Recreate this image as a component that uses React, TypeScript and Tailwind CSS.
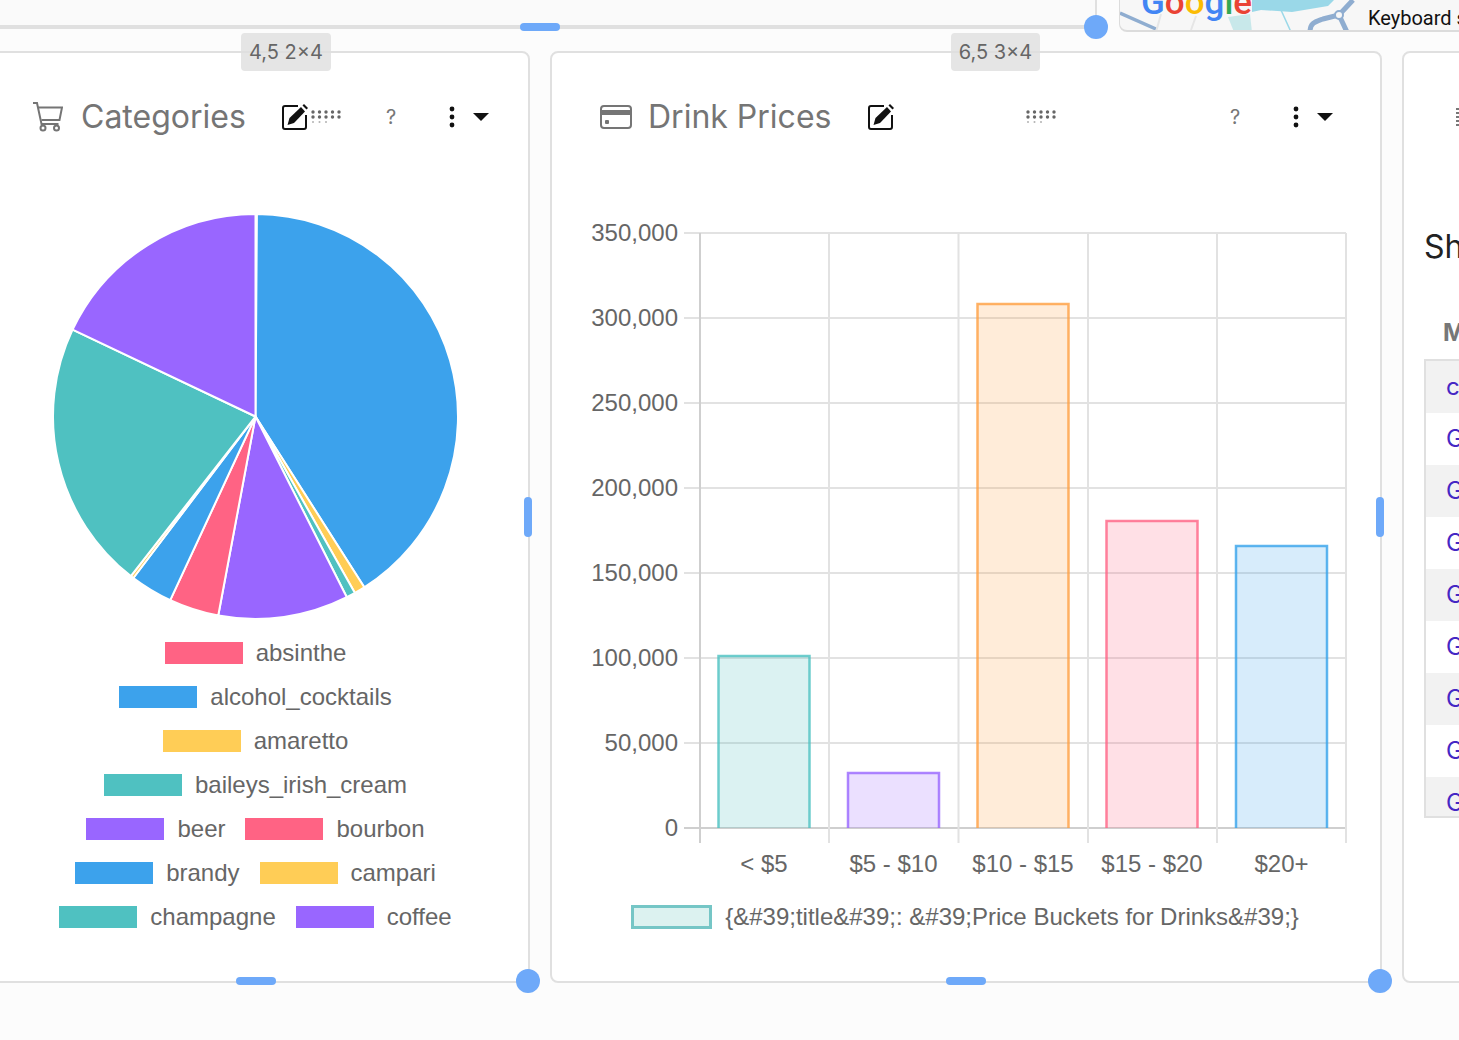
const handle = "absolute bg-[#6ea9f9]";

const polar = (angle: number, r = 202.5) => {
  const a = ((angle - 90) * Math.PI) / 180;
  return `${255.5 + r * Math.cos(a)} ${416.5 + r * Math.sin(a)}`;
};

const slices = [
  { from: 0, to: 0.4, color: "#ff6384" },
  { from: 0.4, to: 147.5, color: "#3ca2ec" },
  { from: 147.5, to: 150.6, color: "#ffcd56" },
  { from: 150.6, to: 153.2, color: "#4fc1c1" },
  { from: 153.2, to: 190.6, color: "#9966ff" },
  { from: 190.6, to: 204.9, color: "#ff6384" },
  { from: 204.9, to: 217.1, color: "#3ca2ec" },
  { from: 217.1, to: 218, color: "#ffcd56" },
  { from: 218, to: 295.4, color: "#4fc1c1" },
  { from: 295.4, to: 360, color: "#9966ff" },
];

const legend = [
  { name: "absinthe", color: "bg-[#ff6384]" },
  { name: "alcohol_cocktails", color: "bg-[#3ca2ec]" },
  { name: "amaretto", color: "bg-[#ffcd56]" },
  { name: "baileys_irish_cream", color: "bg-[#4fc1c1]" },
  { name: "beer", color: "bg-[#9966ff]" },
  { name: "bourbon", color: "bg-[#ff6384]" },
  { name: "brandy", color: "bg-[#3ca2ec]" },
  { name: "campari", color: "bg-[#ffcd56]" },
  { name: "champagne", color: "bg-[#4fc1c1]" },
  { name: "coffee", color: "bg-[#9966ff]" },
];

const yTicks = [
  { label: "350,000", y: 233 },
  { label: "300,000", y: 318 },
  { label: "250,000", y: 403 },
  { label: "200,000", y: 488 },
  { label: "150,000", y: 573 },
  { label: "100,000", y: 658 },
  { label: "50,000", y: 743 },
  { label: "0", y: 828 },
];

const xLines = [700, 829, 958.5, 1088, 1217, 1346];

const bars = [
  { label: "< $5", x: 718.5, w: 91, top: 656, fill: "#4bc0c0" },
  { label: "$5 - $10", x: 848, w: 91, top: 773, fill: "#9966ff" },
  { label: "$10 - $15", x: 977.5, w: 91, top: 304, fill: "#ff9f40" },
  { label: "$15 - $20", x: 1106.5, w: 91, top: 521, fill: "#ff6384" },
  { label: "$20+", x: 1236, w: 91, top: 546, fill: "#36a2eb" },
];

const CartIcon = () => (
  <svg width="30" height="30" viewBox="0 0 30 30" fill="none" stroke="#757575" strokeWidth="2" className="shrink-0">
    <path d="M0 1h4l4.500 21h17" />
    <path d="M5 5.500h24l-2.500 12.500h-18" />
    <circle cx="10" cy="26" r="2.500" />
    <circle cx="23.500" cy="26" r="2.500" />
  </svg>
);

const PriceIcon = () => (
  <svg width="32" height="24" viewBox="0 0 32 24" fill="none" className="shrink-0">
    <rect x="1" y="1" width="30" height="22" rx="3" stroke="#757575" strokeWidth="2" />
    <rect x="1" y="5" width="30" height="5" fill="#757575" />
    <rect x="5" y="15" width="4" height="4" rx="1" fill="#757575" />
  </svg>
);

const EditIcon = () => (
  <svg width="26" height="26" viewBox="0 0 26 26" fill="none" className="shrink-0">
    <path d="M16 2H3a2 2 0 0 0-2 2v19a2 2 0 0 0 2 2h19a2 2 0 0 0 2-2V11" stroke="#111" strokeWidth="2" />
    <path d="M5.500 21l2-7L19 3l4 4.500L12 19z" fill="#111" />
    <path d="M20.500 1.500L22 0l4 4-1.500 1.500z" fill="#111" />
  </svg>
);

const DragDots = () => (
  <svg width="30" height="14" viewBox="0 0 30 14" fill="#666" className="shrink-0">
    {[2, 8.500, 15, 21.500, 28].map((x) => (
      <g key={x}>
        <circle cx={x} cy="2" r="1.700" />
        <circle cx={x} cy="7" r="1.700" />
      </g>
    ))}
    <circle cx="2" cy="12" r="1" opacity="0.5" />
    <circle cx="8.500" cy="12" r="1" opacity="0.5" />
    <circle cx="15" cy="12" r="1" opacity="0.5" />
  </svg>
);

const CardActions = () => (
  <div className="ml-auto flex items-center">
    <span className="w-[20px] text-center text-[20px] text-[#777]">?</span>
    <svg width="6" height="22" viewBox="0 0 6 22" fill="#111" className="ml-[48px]">
      <circle cx="3" cy="3" r="2.400" />
      <circle cx="3" cy="11" r="2.400" />
      <circle cx="3" cy="19" r="2.400" />
    </svg>
    <svg width="16" height="8" viewBox="0 0 16 8" fill="#111" className="ml-[18px]">
      <path d="M0 0h16l-8 8z" />
    </svg>
  </div>
);

const Badge = ({ text, className }: { text: string; className: string }) => (
  <div className={`absolute top-[-20px] flex h-[38px] items-center justify-center rounded-[4px] bg-[#dedede]/80 text-[20px] text-[#666] ${className}`}>
    {text}
  </div>
);

const CategoriesCard = () => (
  <div className="relative h-[932px] w-[561px] shrink-0 rounded-lg border-2 border-[#e0e0e0] bg-white">
    <Badge text="4,5 2×4" className="left-[270px] w-[90px]" />
    <div className="mt-[42px] flex h-[44px] items-center pl-[62px] pr-[39px]">
      <CartIcon />
      <h2 className="ml-[18px] text-[32px] font-[425] text-[#757575]">Categories</h2>
      <div className="ml-[36px]">
        <EditIcon />
      </div>
      <div className="ml-[3px]">
        <DragDots />
      </div>
      <CardActions />
    </div>
    <div className="pl-[62px] pr-[50px]">
      <svg viewBox="33 210 445 421" className="mt-[71px] block h-[421px] w-[445px]">
        {slices.map((s) => (
          <path
            key={s.from}
            d={`M255.500 416.500L${polar(s.from)}A202.500 202.500 0 ${s.to - s.from > 180 ? 1 : 0} 1 ${polar(s.to)}Z`}
            fill={s.color}
            stroke="#fff"
            strokeWidth="2"
            strokeLinejoin="round"
          />
        ))}
      </svg>
      <div className="flex flex-wrap justify-center gap-x-5 font-['Liberation_Sans',sans-serif] text-[24px] text-[#666]">
        {legend.map((l) => (
          <div key={l.name} className="flex h-[44px] items-center gap-[13px]">
            <span className={`h-[22px] w-[78px] ${l.color}`} />
            {l.name}
          </div>
        ))}
      </div>
    </div>
    <div className={`${handle} right-[-4px] top-[444px] h-[40px] w-[8px] rounded`} />
    <div className={`${handle} bottom-[-4px] left-[265px] h-[8px] w-[40px] rounded`} />
    <div className={`${handle} bottom-[-12px] right-[-12px] size-[24px] rounded-full`} />
  </div>
);

const PricesCard = () => (
  <div className="relative h-[932px] w-[832px] shrink-0 rounded-lg border-2 border-[#e0e0e0] bg-white">
    <Badge text="6,5 3×4" className="left-[399px] w-[89px]" />
    <div className="mt-[42px] flex h-[44px] items-center pl-[48px] pr-[47px]">
      <PriceIcon />
      <h2 className="ml-[16px] text-[32px] font-[425] text-[#757575]">Drink Prices</h2>
      <div className="ml-[37px]">
        <EditIcon />
      </div>
      <div className="ml-[132px]">
        <DragDots />
      </div>
      <CardActions />
    </div>
    <svg viewBox="553 210 827 680" className="ml-[1px] mt-[71px] block h-[680px] w-[827px] font-['Liberation_Sans',sans-serif]">
      {yTicks.map((t) => (
        <g key={t.label}>
          <line x1="684" x2="1346" y1={t.y} y2={t.y} stroke={t.y === 828 ? "#cfcfcf" : "#e2e2e2"} strokeWidth="2" />
          <text x="678" y={t.y + 8} textAnchor="end" fontSize="24" fill="#666">
            {t.label}
          </text>
        </g>
      ))}
      {xLines.map((x, i) => (
        <line key={x} x1={x} x2={x} y1="233" y2="843" stroke={i === 0 ? "#cfcfcf" : "#e2e2e2"} strokeWidth="2" />
      ))}
      {bars.map((b) => (
        <g key={b.label}>
          <path
            d={`M${b.x} 828V${b.top}H${b.x + b.w}V828`}
            fill={b.fill}
            fillOpacity="0.2"
            stroke={b.fill}
            strokeOpacity="0.8"
            strokeWidth="2.500"
          />
          <text x={b.x + b.w / 2} y="872" textAnchor="middle" fontSize="24" fill="#666">
            {b.label}
          </text>
        </g>
      ))}
    </svg>
    <div className="mt-[15px] flex items-center justify-center gap-[13px] pr-[2px] font-['Liberation_Sans',sans-serif] text-[24px] leading-[24px] text-[#666]">
      <span className="h-[24px] w-[81px] shrink-0 border-[3px] border-[#75c6c6] bg-[#dcf2f0]" />
      {"{&#39;title&#39;: &#39;Price Buckets for Drinks&#39;}"}
    </div>
    <div className={`${handle} right-[-4px] top-[444px] h-[40px] w-[8px] rounded`} />
    <div className={`${handle} bottom-[-4px] left-[394px] h-[8px] w-[40px] rounded`} />
    <div className={`${handle} bottom-[-12px] right-[-12px] size-[24px] rounded-full`} />
  </div>
);

const rows = ["c", "G", "G", "G", "G", "G", "G", "G", "G"];

const ShotsCard = () => (
  <div className="relative h-[932px] w-[831px] shrink-0 rounded-lg border-2 border-[#e0e0e0] bg-white">
    <div className="mt-[42px] flex h-[44px] items-center pl-[52px]">
      <svg width="3" height="20" viewBox="0 0 3 20" fill="#777">
        {[1, 5, 9, 13, 17].map((y) => (
          <rect key={y} y={y} width="3" height="2" />
        ))}
      </svg>
    </div>
    <h3 className="ml-[20px] mt-[84px] h-[48px] text-[32px] leading-[48px] text-[#222]">Sh</h3>
    <div className="ml-[39px] mt-[47px] h-[30px] text-[24px] font-bold leading-[30px] text-[#777]">M</div>
    <div className="ml-[20px] mt-[11px] border-2 border-r-0 border-[#e0e0e0] text-[24px] leading-[52px] text-[#4527c4]">
      {rows.map((r, i) => (
        <div
          key={i}
          className={`overflow-hidden pl-5 ${i % 2 === 0 ? "bg-[#f2f2f2]" : "bg-white"} ${i === 8 ? "h-[39px]" : "h-[52px]"}`}
        >
          {r}
        </div>
      ))}
    </div>
  </div>
);

const MapStrip = () => (
  <div className="h-[32px] flex-1 overflow-hidden rounded-bl-lg border-b-2 border-l border-[#dcdcdc] bg-[#f7f7f7]">
    <svg viewBox="1119 0 340 32" className="block h-[32px] w-[340px]">
      <path d="M1251 0h82l-6 6-36 6-31-2-9 2z" fill="#9ad8e8" />
      <path d="M1227 17l22-3 2 18h-18z" fill="#c8e8ea" />
      <path d="M1280 10l10 22" stroke="#9ad8e8" strokeWidth="1.500" fill="none" />
      <path d="M1119 13l36 16" stroke="#8fadd0" strokeWidth="3.500" fill="none" />
      <path d="M1155 32l5-18M1190 30l5-14" stroke="#e6e6e6" strokeWidth="2" fill="none" />
      <path d="M1309 32c0-9 5-10 13-13l16-4 14-15M1338 15l8 17" stroke="#8fadd0" strokeWidth="5" fill="none" />
      <circle cx="1338" cy="15" r="4" fill="#f7f7f7" stroke="#8fadd0" strokeWidth="2" />
      <text y="14" fontSize="35" fontWeight="500" fontFamily="Roboto, sans-serif">
        <tspan x="1140" fill="#4285f4">G</tspan>
        <tspan fill="#ea4335">o</tspan>
        <tspan fill="#fbbc05">o</tspan>
        <tspan fill="#4285f4">g</tspan>
        <tspan fill="#34a853">l</tspan>
        <tspan fill="#ea4335">e</tspan>
      </text>
      <text x="1367" y="25" fontSize="20" fontFamily="Roboto, sans-serif" fill="#111">
        Keyboard shortcuts
      </text>
    </svg>
  </div>
);

export default function App() {
  return (
    <div className="h-[1040px] w-[1459px] overflow-hidden bg-[#fcfcfc] font-['Inter',sans-serif]">
      <div className="-ml-[31px] flex h-[51px] w-[1490px] items-start gap-[22px]">
        <div className="relative h-[29px] w-[1128px] shrink-0 rounded-br-sm border-b-4 border-r-2 border-[#e0e0e0] bg-[#fafafa]">
          <div className={`${handle} left-[551px] top-[23px] h-[8px] w-[40px] rounded`} />
          <div className={`${handle} bottom-[-14px] right-[-13px] size-[24px] rounded-full`} />
        </div>
        <MapStrip />
      </div>
      <div className="-ml-[31px] flex gap-[20px]">
        <CategoriesCard />
        <PricesCard />
        <ShotsCard />
      </div>
    </div>
  );
}
